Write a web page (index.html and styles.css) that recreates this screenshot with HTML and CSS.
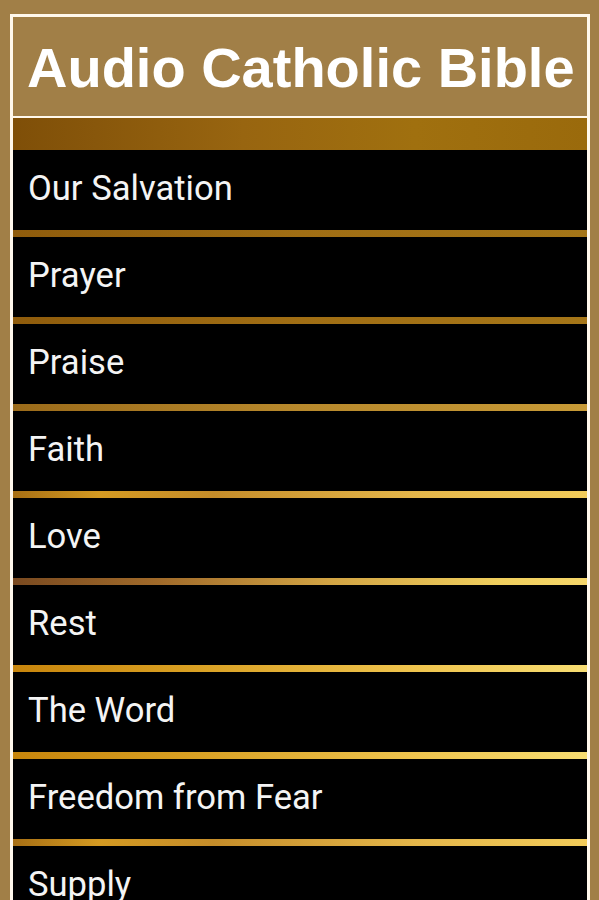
FILE: index.html
```html
<!DOCTYPE html>
<html>
<head>
    <title>Audio Catholic Bible</title>
    <link rel="stylesheet" href="styles.css">
</head>
<body>
    <div class="frame">
        <h1 class="title">Audio Catholic Bible</h1>
        <div class="band"></div>
        <ul class="topics">
            <li class="topic">Our Salvation</li>
            <li class="sep sep-dark"></li>
            <li class="topic">Prayer</li>
            <li class="sep sep-dark"></li>
            <li class="topic">Praise</li>
            <li class="sep sep-mid"></li>
            <li class="topic">Faith</li>
            <li class="sep sep-glow"></li>
            <li class="topic">Love</li>
            <li class="sep sep-fade"></li>
            <li class="topic">Rest</li>
            <li class="sep sep-bright"></li>
            <li class="topic">The Word</li>
            <li class="sep sep-bright"></li>
            <li class="topic">Freedom from Fear</li>
            <li class="sep sep-glow"></li>
            <li class="topic">Supply</li>
        </ul>
    </div>
</body>
</html>
```

FILE: styles.css
```css
body {
    margin: 0;
    background-color: #a17f47;
    height: 900px;
    overflow: hidden;
}
.frame {
    margin: 14px 9px 0 10px;
    border: 3px solid #fff8ec;
    border-bottom: none;
}
.title {
    margin: 0;
    height: 99px;
    line-height: 102px;
    padding-left: 14px;
    font-family: "Liberation Sans", Arial, sans-serif;
    font-size: 56px;
    font-weight: bold;
    color: #ffffff;
    border-bottom: 2px solid #fff8ec;
    white-space: nowrap;
}
.band {
    height: 32px;
    background: linear-gradient(90deg, #7f4f08 0%, #986510 40%, #a0700f 70%, #9a6a0c 100%);
}
.topics {
    list-style: none;
    margin: 0;
    padding: 0;
    background-color: #000;
}
.topic {
    height: 80px;
    line-height: 76px;
    padding-left: 15px;
    font-family: Roboto, "Noto Sans", sans-serif;
    font-size: 34.6px;
    color: #f4f4f4;
}
.sep {
    height: 7px;
}
.sep-dark {
    background: linear-gradient(90deg, #8f5c0c 0%, #a06e14 50%, #a57618 100%);
}
.sep-mid {
    background: linear-gradient(90deg, #9b6b1a 0%, #b8892c 50%, #c79a36 100%);
}
.sep-glow {
    background: linear-gradient(90deg, #a76f14 0%, #d49a22 15%, #c58d2a 35%, #e4b64a 70%, #f2cc5a 100%);
}
.sep-fade {
    background: linear-gradient(90deg, #7a4a20 0%, #a06a2a 25%, #d2a444 55%, #f0cf5e 85%, #f6d76a 100%);
}
.sep-bright {
    background: linear-gradient(90deg, #c7850c 0%, #d89f22 30%, #efc44e 70%, #f7dd72 100%);
}
```
